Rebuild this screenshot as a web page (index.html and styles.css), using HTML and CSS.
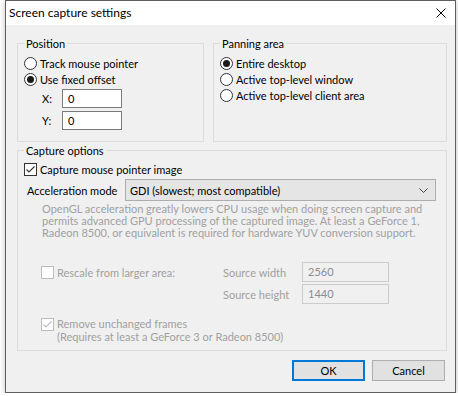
FILE: index.html
```html
<!DOCTYPE html>
<html lang="en">
<head>
<meta charset="UTF-8">
<meta name="viewport" content="width=device-width, initial-scale=1.0">
<title>Screen capture settings</title>
<link rel="stylesheet" href="styles.css">
</head>
<body>
<div class="window">
  <div class="titlebar">
    <span class="title">Screen capture settings</span>
    <span class="close">
      <svg width="10" height="10" viewBox="0 0 10 10"><path d="M0.5 0.5L9.5 9.5M9.5 0.5L0.5 9.5" stroke="#000" stroke-width="1" fill="none"/></svg>
    </span>
  </div>
  <div class="dialog-body">
    <div class="top-row">
      <fieldset class="group group-position">
        <legend>Position</legend>
        <div class="option"><span class="radio"></span>Track mouse pointer</div>
        <div class="option"><span class="radio on"></span>Use fixed offset</div>
        <div class="offset-grid">
          <span>X:</span><span class="textbox">0</span>
          <span>Y:</span><span class="textbox">0</span>
        </div>
      </fieldset>
      <fieldset class="group">
        <legend>Panning area</legend>
        <div class="option"><span class="radio on"></span>Entire desktop</div>
        <div class="option"><span class="radio"></span>Active top-level window</div>
        <div class="option"><span class="radio"></span>Active top-level client area</div>
      </fieldset>
    </div>
    <fieldset class="group group-capture">
      <legend>Capture options</legend>
      <div class="option">
        <span class="check"><svg width="11" height="11" viewBox="0 0 11 11"><path d="M1.5 5.5L4 8L9.5 2.5" stroke="#333" stroke-width="1.1" fill="none"/></svg></span>Capture mouse pointer image
      </div>
      <div class="accel-row">
        <span>Acceleration mode</span>
        <div class="combo">
          <span>GDI (slowest; most compatible)</span>
          <svg width="9" height="5" viewBox="0 0 9 5"><path d="M0.5 0.5L4.5 4.5L8.5 0.5" stroke="#444" stroke-width="1" fill="none"/></svg>
        </div>
      </div>
      <p class="hint">OpenGL acceleration greatly lowers CPU usage when doing screen capture and<br>permits advanced GPU processing of the captured image. At least a GeForce 1,<br>Radeon 8500, or equivalent is required for hardware YUV conversion support.</p>
      <div class="rescale-grid">
        <div class="option disabled"><span class="check off"></span>Rescale from larger area:</div>
        <span class="muted">Source width</span>
        <span class="textbox inactive">2560</span>
        <span></span>
        <span class="muted">Source height</span>
        <span class="textbox inactive">1440</span>
      </div>
      <div class="remove-row disabled">
        <span class="check off"><svg width="11" height="11" viewBox="0 0 11 11"><path d="M1.5 5.5L4 8L9.5 2.5" stroke="#bcbcbc" stroke-width="1.1" fill="none"/></svg></span>
        <span>Remove unchanged frames<br>(Requires at least a GeForce 3 or Radeon 8500)</span>
      </div>
    </fieldset>
    <div class="buttons">
      <button class="btn btn-default">OK</button>
      <button class="btn">Cancel</button>
    </div>
  </div>
</div>
</body>
</html>
```
FILE: styles.css
```css
*{margin:0;padding:0;box-sizing:border-box;}
body{background:#fff;font-family:"Lato",sans-serif;font-size:11px;color:#000;}
.window{margin-left:5px;width:451px;height:393px;border:1px solid #5f5f5f;background:#f0f0f0;box-shadow:0 1px 6px rgba(0,0,0,.25);display:flex;flex-direction:column;}
.titlebar{height:24px;background:#fff;display:flex;align-items:center;justify-content:space-between;padding:0 9px 0 3px;}
.title{font-size:12px;line-height:16px;}
.close{display:flex;width:10px;height:10px;}
.dialog-body{flex:1;padding:11px 8px 0 11px;display:flex;flex-direction:column;}
.top-row{display:grid;grid-template-columns:187px 1fr;gap:9px;}
.group{border:1px solid #dcdcdc;padding:0;margin:0;min-width:0;}
.group legend{margin-left:6px;padding:0 2px;line-height:15px;height:15px;}
.group-position{padding:4px 0 11px;}
.top-row .group:not(.group-position){padding-top:4px;}
.option{display:flex;align-items:center;height:16px;padding-left:6px;gap:3px;}
.radio{width:13px;height:13px;border:1px solid #333;border-radius:50%;background:#fff;display:flex;align-items:center;justify-content:center;flex-shrink:0;}
.radio.on::after{content:"";width:7px;height:7px;border-radius:50%;background:#1a1a1a;}
.check{width:13px;height:13px;border:1px solid #333;background:#fff;display:flex;align-items:center;justify-content:center;flex-shrink:0;}
.check.off{border-color:#bcbcbc;}
.offset-grid{display:grid;grid-template-columns:20px 60px;row-gap:3px;align-items:center;padding-left:24px;margin-top:2px;}
.textbox{height:19px;border:1px solid #7a7a7a;background:#fff;padding-left:5px;line-height:17px;}
.group-capture{margin-top:1px;padding:3px 0 7px;}
.accel-row{display:flex;align-items:center;height:22px;margin-top:2px;padding-left:9px;}
.accel-row>span{width:98px;}
.combo{width:311px;height:22px;background:#e5e5e5;border:1px solid #adadad;display:flex;align-items:center;justify-content:space-between;padding:0 4px 0 4px;}
.combo svg{margin-right:3px;}
.hint{color:#a0a0a0;line-height:12px;padding-left:24px;margin-top:2px;}
.rescale-grid{display:grid;grid-template-columns:182px 79px 87px;grid-template-rows:20px 20px;row-gap:2px;align-items:center;padding-left:23px;margin-top:23px;}
.rescale-grid .option{padding-left:0;}
.disabled,.muted{color:#a0a0a0;}
.textbox.inactive{height:20px;border-color:#cccccc;background:#f0f0f0;color:#8c8c8c;line-height:18px;}
.remove-row{display:flex;align-items:flex-start;gap:3px;padding-left:23px;margin-top:13px;line-height:13px;}
.remove-row .check{margin-top:1px;}
.buttons{display:flex;justify-content:flex-end;gap:7px;margin-top:9px;padding-right:2px;}
.btn{width:73px;height:21px;background:#e1e1e1;border:1px solid #adadad;font-family:inherit;font-size:11px;color:#000;}
.btn-default{border:2px solid #0078d7;}
```
